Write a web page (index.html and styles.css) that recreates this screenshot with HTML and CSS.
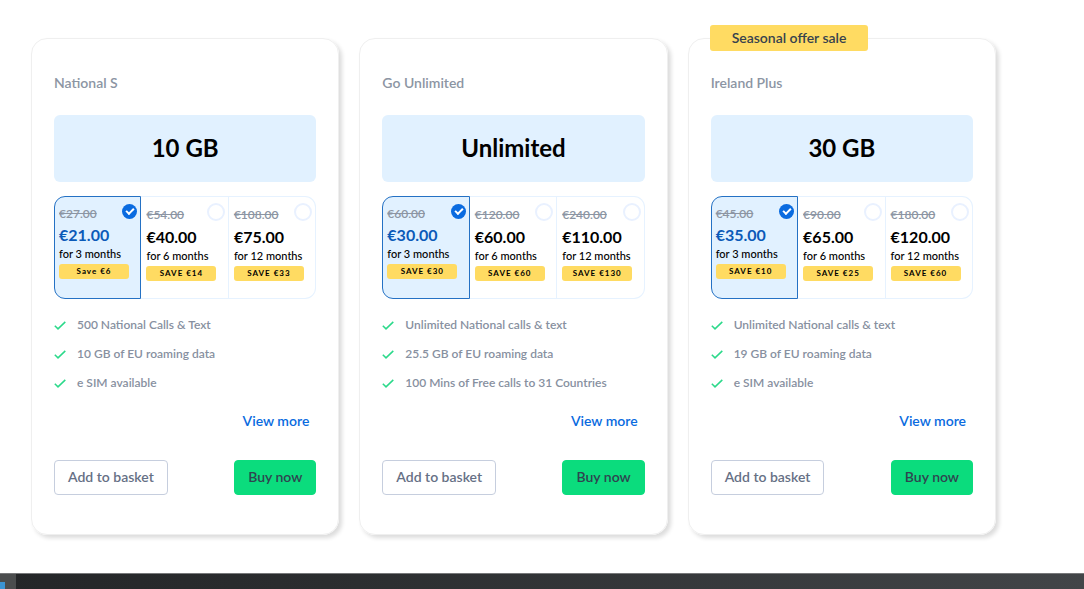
FILE: index.html
```html
<!DOCTYPE html>
<html lang="en">
<head>
<meta charset="utf-8">
<meta name="viewport" content="width=device-width, initial-scale=1">
<title>SIM plans</title>
<link rel="stylesheet" href="styles.css">
</head>
<body>
<svg class="symbols" aria-hidden="true">
  <symbol id="tick" viewBox="0 0 12 9"><path d="M0.8 4.8 4 7.9 11.3 0.9" fill="none" stroke="currentColor" stroke-width="1.5"/></symbol>
</svg>
<main class="plans">
  <article class="card">
    <h2 class="card-title">National S</h2>
    <p class="allowance">10 GB</p>
    <div class="options">
      <label class="option"><input class="radio" type="radio" name="national" checked><s class="was">€27.00</s><strong class="price">€21.00</strong><span class="term">for 3 months</span><span class="save">Save €6</span></label>
      <label class="option"><input class="radio" type="radio" name="national"><s class="was">€54.00</s><strong class="price">€40.00</strong><span class="term">for 6 months</span><span class="save">SAVE €14</span></label>
      <label class="option"><input class="radio" type="radio" name="national"><s class="was">€108.00</s><strong class="price">€75.00</strong><span class="term">for 12 months</span><span class="save">SAVE €33</span></label>
    </div>
    <ul class="features">
      <li class="feature"><svg class="tick" aria-hidden="true"><use href="#tick"/></svg>500 National Calls &amp; Text</li>
      <li class="feature"><svg class="tick" aria-hidden="true"><use href="#tick"/></svg>10 GB of EU roaming data</li>
      <li class="feature"><svg class="tick" aria-hidden="true"><use href="#tick"/></svg>e SIM available</li>
    </ul>
    <a class="more" href="#">View more</a>
    <div class="actions"><button class="button basket" type="button">Add to basket</button><button class="button buy" type="button">Buy now</button></div>
  </article>
  <article class="card">
    <h2 class="card-title">Go Unlimited</h2>
    <p class="allowance">Unlimited</p>
    <div class="options">
      <label class="option"><input class="radio" type="radio" name="unlimited" checked><s class="was">€60.00</s><strong class="price">€30.00</strong><span class="term">for 3 months</span><span class="save">SAVE €30</span></label>
      <label class="option"><input class="radio" type="radio" name="unlimited"><s class="was">€120.00</s><strong class="price">€60.00</strong><span class="term">for 6 months</span><span class="save">SAVE €60</span></label>
      <label class="option"><input class="radio" type="radio" name="unlimited"><s class="was">€240.00</s><strong class="price">€110.00</strong><span class="term">for 12 months</span><span class="save">SAVE €130</span></label>
    </div>
    <ul class="features">
      <li class="feature"><svg class="tick" aria-hidden="true"><use href="#tick"/></svg>Unlimited National calls &amp; text</li>
      <li class="feature"><svg class="tick" aria-hidden="true"><use href="#tick"/></svg>25.5 GB of EU roaming data</li>
      <li class="feature"><svg class="tick" aria-hidden="true"><use href="#tick"/></svg>100 Mins of Free calls to 31 Countries</li>
    </ul>
    <a class="more" href="#">View more</a>
    <div class="actions"><button class="button basket" type="button">Add to basket</button><button class="button buy" type="button">Buy now</button></div>
  </article>
  <article class="card">
    <span class="ribbon">Seasonal offer sale</span>
    <h2 class="card-title">Ireland Plus</h2>
    <p class="allowance">30 GB</p>
    <div class="options">
      <label class="option"><input class="radio" type="radio" name="ireland" checked><s class="was">€45.00</s><strong class="price">€35.00</strong><span class="term">for 3 months</span><span class="save">SAVE €10</span></label>
      <label class="option"><input class="radio" type="radio" name="ireland"><s class="was">€90.00</s><strong class="price">€65.00</strong><span class="term">for 6 months</span><span class="save">SAVE €25</span></label>
      <label class="option"><input class="radio" type="radio" name="ireland"><s class="was">€180.00</s><strong class="price">€120.00</strong><span class="term">for 12 months</span><span class="save">SAVE €60</span></label>
    </div>
    <ul class="features">
      <li class="feature"><svg class="tick" aria-hidden="true"><use href="#tick"/></svg>Unlimited National calls &amp; text</li>
      <li class="feature"><svg class="tick" aria-hidden="true"><use href="#tick"/></svg>19 GB of EU roaming data</li>
      <li class="feature"><svg class="tick" aria-hidden="true"><use href="#tick"/></svg>e SIM available</li>
    </ul>
    <a class="more" href="#">View more</a>
    <div class="actions"><button class="button basket" type="button">Add to basket</button><button class="button buy" type="button">Buy now</button></div>
  </article>
</main>
<footer class="taskbar"><span class="taskbar-item"><span class="taskbar-icon"></span></span></footer>
</body>
</html>
```
FILE: styles.css
```css
*, *::after { box-sizing: border-box; }

body {
  margin: 0;
  min-height: 100vh;
  display: flex;
  flex-direction: column;
  background: #fff;
  color: #000;
  font-family: Lato, "Open Sans", sans-serif;
  font-size: 14px;
}

.symbols { position: absolute; width: 0; height: 0; }

.plans {
  flex: 1;
  display: grid;
  grid-template-columns: repeat(3, minmax(0, 1fr));
  align-items: start;
  gap: 20px;
  padding: 38px 88px 37px 31px;
}

.card {
  position: relative;
  display: flex;
  flex-direction: column;
  padding: 32px 22px 39px;
  border: 1px solid #efefef;
  border-radius: 16px;
  box-shadow: 3px 3px 4px rgba(0, 0, 0, 0.14);
}

.ribbon {
  position: absolute;
  top: -14px;
  left: 21px;
  padding: 0 22px;
  border-radius: 3px;
  background: #ffdb62;
  color: #37424e;
  font-weight: 600;
  font-size: 14px;
  line-height: 26px;
}

.card-title {
  margin: 0;
  color: #8c95a3;
  font-size: 14px;
  font-weight: 600;
  line-height: 24px;
}

.allowance {
  margin: 20px 0 14px;
  padding-bottom: 2px;
  border-radius: 6px;
  background: #e1f1ff;
  font-size: 24px;
  font-weight: 700;
  line-height: 65px;
  text-align: center;
}

.options {
  display: grid;
  grid-template-columns: repeat(3, minmax(0, 1fr));
}

.option {
  position: relative;
  display: flex;
  flex-direction: column;
  min-height: 103px;
  padding: 9px 4px;
  border: 1px solid #e6f2ff;
  border-left-width: 0;
  white-space: nowrap;
  cursor: pointer;
}

.option:first-child { border-left-width: 1px; border-radius: 11px 0 0 11px; }
.option:last-child { border-radius: 0 11px 11px 0; }
.option:not(:has(:checked)) { padding-left: 5px; }

.option:has(:checked) {
  padding-top: 8px;
  border: 1px solid #2471c4;
  background: #e1f1ff;
}

.radio {
  position: absolute;
  top: 6px;
  right: 3px;
  width: 18px;
  height: 18px;
  margin: 0;
  appearance: none;
  border: 2px solid #e9f1ff;
  border-radius: 50%;
  background: #fff;
}

.radio:checked {
  top: 7px;
  width: 15px;
  height: 15px;
  border: 0;
  background: #0a6be0;
}

.radio:checked::after {
  content: "";
  position: absolute;
  top: 4px;
  left: 4px;
  width: 8px;
  height: 5px;
  border: solid #fff;
  border-width: 0 0 2px 2px;
  transform: rotate(-45deg);
}

.was {
  color: #8c95a3;
  font-size: 12px;
  font-weight: 600;
  line-height: 18px;
}

.price {
  font-size: 16px;
  font-weight: 700;
  line-height: 26px;
}

.option:has(:checked) .was { line-height: 17px; }
.option:has(:checked) .price { color: #0b5ab8; }

.term {
  font-size: 11px;
  font-weight: 500;
  line-height: 12px;
}

.save {
  width: 70px;
  margin-top: 4px;
  border-radius: 3px;
  background: #ffdb62;
  font-size: 8px;
  font-weight: 700;
  letter-spacing: 1px;
  line-height: 15px;
  text-align: center;
}

.features {
  display: grid;
  gap: 9px;
  margin: 16px 0 0;
  padding: 0;
  list-style: none;
}

.feature {
  display: flex;
  align-items: center;
  gap: 11px;
  color: #8790a0;
  font-size: 12px;
  font-weight: 600;
  line-height: 20px;
  white-space: nowrap;
}

.tick { width: 12px; height: 9px; color: #2bd98a; }

.more {
  align-self: flex-end;
  margin: 16px 7px 27px 0;
  color: #0a6be0;
  font-size: 14px;
  font-weight: 600;
  line-height: 24px;
  text-decoration: none;
}

.actions { display: flex; justify-content: space-between; }

.button {
  height: 35px;
  padding: 0 13px 2px;
  border: 1px solid #c6cede;
  border-radius: 4px;
  background: #fff;
  color: #667085;
  font-family: inherit;
  font-size: 14px;
  font-weight: 600;
  cursor: pointer;
}

.buy { border-color: #0bdc7d; background: #0bdc7d; color: #2f4450; }

.taskbar {
  display: flex;
  height: 16px;
  border-top: 1px solid #77787a;
  background: linear-gradient(90deg, #242628, #2b2d2f 30%, #424548);
}

.taskbar-item { display: flex; align-items: flex-end; width: 16px; background: #4b4d4e; }
.taskbar-icon { width: 5px; height: 7px; background: #3b94d4; }
```
